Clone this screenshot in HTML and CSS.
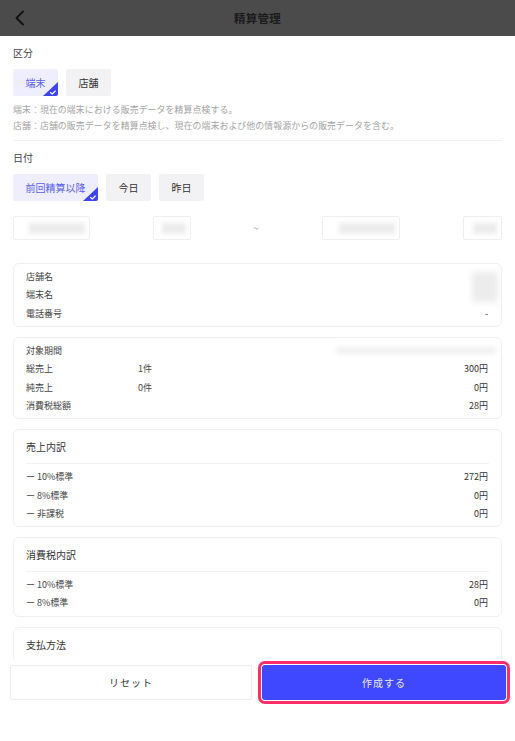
FILE: index.html
```html
<!DOCTYPE html>
<html lang="ja">
<head>
<meta charset="utf-8">
<title>精算管理</title>
<link rel="stylesheet" href="styles.css">
</head>
<body>
<div class="app">
  <header class="topbar">
    <svg class="back" width="12" height="16" viewBox="0 0 12 16"><path d="M9 1.5 L2.5 8 L9 14.5" fill="none" stroke="#111" stroke-width="1.8" stroke-linecap="round" stroke-linejoin="round"/></svg>
    <div class="title">精算管理</div>
  </header>

  <main class="content">
    <div class="label">区分</div>
    <div class="chips">
      <div class="chip selected">端末<svg class="corner" width="15" height="14" viewBox="0 0 15 14"><polygon points="15,0 15,14 0,14" fill="#3d45f2"/><path d="M7.5 10.5 L9.3 12 L12.3 9" fill="none" stroke="#fff" stroke-width="1.1" stroke-linecap="round" stroke-linejoin="round"/></svg></div>
      <div class="chip">店舗</div>
    </div>
    <div class="desc">
      <div>端末：現在の端末における販売データを精算点検する。</div>
      <div>店舗：店舗の販売データを精算点検し、現在の端末および他の情報源からの販売データを含む。</div>
    </div>
    <div class="divider"></div>

    <div class="label">日付</div>
    <div class="chips">
      <div class="chip selected">前回精算以降<svg class="corner" width="15" height="14" viewBox="0 0 15 14"><polygon points="15,0 15,14 0,14" fill="#3d45f2"/><path d="M7.5 10.5 L9.3 12 L12.3 9" fill="none" stroke="#fff" stroke-width="1.1" stroke-linecap="round" stroke-linejoin="round"/></svg></div>
      <div class="chip">今日</div>
      <div class="chip">昨日</div>
    </div>

    <div class="daterow">
      <div class="datebox w77"><span class="blur b56"></span></div>
      <div class="datebox w38"><span class="blur b26"></span></div>
      <div class="tilde">~</div>
      <div class="datebox w78"><span class="blur b56"></span></div>
      <div class="datebox w39"><span class="blur b26"></span></div>
    </div>

    <section class="card">
      <div class="rows">
        <div class="row"><span class="k">店舗名</span><span></span><span class="v top"><span class="redact"></span></span></div>
        <div class="row"><span class="k">端末名</span><span></span><span class="v"></span></div>
        <div class="row"><span class="k">電話番号</span><span></span><span class="v">-</span></div>
      </div>
    </section>

    <section class="card">
      <div class="rows">
        <div class="row"><span class="k">対象期間</span><span></span><span class="v"><span class="period"></span></span></div>
        <div class="row"><span class="k">総売上</span><span class="m">1件</span><span class="v">300円</span></div>
        <div class="row"><span class="k">純売上</span><span class="m">0件</span><span class="v">0円</span></div>
        <div class="row"><span class="k">消費税総額</span><span></span><span class="v">28円</span></div>
      </div>
    </section>

    <section class="card">
      <div class="card-title">売上内訳</div>
      <div class="rows">
        <div class="row"><span class="k">ー 10%標準</span><span></span><span class="v">272円</span></div>
        <div class="row"><span class="k">ー 8%標準</span><span></span><span class="v">0円</span></div>
        <div class="row"><span class="k">ー 非課税</span><span></span><span class="v">0円</span></div>
      </div>
    </section>

    <section class="card">
      <div class="card-title">消費税内訳</div>
      <div class="rows">
        <div class="row"><span class="k">ー 10%標準</span><span></span><span class="v">28円</span></div>
        <div class="row"><span class="k">ー 8%標準</span><span></span><span class="v">0円</span></div>
      </div>
    </section>

    <section class="card last">
      <div class="card-title plain">支払方法</div>
    </section>
  </main>

  <footer class="actions">
    <button class="btn reset">リセット</button>
    <button class="btn create">作成する</button>
  </footer>
</div>
</body>
</html>
```

FILE: styles.css
```css
* { box-sizing: border-box; }
html, body { margin: 0; padding: 0; }
body {
  font-family: "Noto Sans CJK JP", "Noto Sans", sans-serif;
  color: #333;
  background: #fff;
}
.app {
  height: 100vh;
  display: flex;
  flex-direction: column;
  overflow: hidden;
}
.topbar {
  height: 36px;
  flex: 0 0 36px;
  background: #4b4b4b;
  display: flex;
  align-items: center;
}
.back { margin-left: 14px; }
.title {
  flex: 1;
  text-align: center;
  margin-right: 26px;
  font-size: 11.5px;
  font-weight: 700;
  color: #1b1b1b;
  letter-spacing: 0.3px;
}
.content {
  flex: 1;
  overflow: hidden;
  padding: 0 13px;
}
.label {
  margin-top: 8px;
  font-size: 10px;
  line-height: 18px;
  color: #444;
}
.chips {
  display: flex;
  gap: 8px;
  margin-top: 7px;
}
.chip {
  position: relative;
  height: 27px;
  padding: 0 12.5px;
  display: flex;
  align-items: center;
  font-size: 10px;
  background: #f2f2f4;
  color: #333;
  border-radius: 2px;
  overflow: hidden;
}
.chip.selected {
  background: #eeeefe;
  color: #5a5ff0;
}
.corner {
  position: absolute;
  right: 0;
  bottom: 0;
}
.desc {
  margin-top: 6px;
  font-size: 8.9px;
  line-height: 16px;
  color: #a3a3a3;
  letter-spacing: 0.1px;
}
.divider {
  margin-top: 6px;
  height: 1px;
  background: #f1f1f1;
}
.daterow {
  margin-top: 15px;
  display: flex;
  justify-content: space-between;
  align-items: center;
}
.datebox {
  height: 24px;
  border: 1px solid #efefef;
  border-radius: 2px;
  display: flex;
  align-items: center;
  justify-content: flex-end;
  padding-right: 4px;
}
.w77 { width: 77px; }
.w38 { width: 38px; }
.w78 { width: 78px; }
.w39 { width: 39px; }
.blur {
  display: block;
  height: 11px;
  background: #ececec;
  filter: blur(2px);
}
.b56 { width: 56px; }
.b26 { width: 24px; }
.tilde {
  width: 6px;
  font-size: 9px;
  color: #888;
}
.card {
  border: 1px solid #f0f0f0;
  border-radius: 6px;
  padding: 0 12px;
  margin-top: 10px;
}
.daterow + .card { margin-top: 23px; }
.card.last { padding-bottom: 60px; }
.card-title {
  padding: 7px 0;
  font-size: 10px;
  line-height: 19px;
  color: #333;
  border-bottom: 1px solid #f2f2f2;
}
.rows { padding: 3.5px 0; }
.row {
  display: grid;
  grid-template-columns: 112px 1fr auto;
  height: 18.3px;
  align-items: center;
  font-size: 9px;
  color: #444;
}
.row .v { text-align: right; color: #333; padding-right: 1px; }
.row .v.top {
  align-self: start;
  height: 18.3px;
}
.redact {
  display: block;
  width: 26px;
  height: 30px;
  margin-top: 4.5px;
  margin-right: -10px;
  background: #ececec;
  filter: blur(3px);
}
.period {
  display: block;
  width: 160px;
  height: 7px;
  margin-right: -8px;
  background: #efefef;
  filter: blur(2.5px);
}
.actions {
  flex: 0 0 82px;
  height: 82px;
  background: #fff;
  display: flex;
  gap: 10px;
  padding: 6px 9px 41px 10px;
}
.btn {
  flex: 1;
  height: 35px;
  font-family: inherit;
  font-size: 10px;
  border-radius: 2px;
  letter-spacing: 1px;
}
.reset {
  background: #fff;
  border: 1px solid #ededed;
  color: #333;
}
.create {
  flex: 0 0 244px;
  background: #3f48ff;
  border: none;
  color: #e8e8ff;
  border-radius: 3px;
  box-shadow: 0 0 0 1px #fff, 0 0 0 4px #ff2d6a;
}
```
